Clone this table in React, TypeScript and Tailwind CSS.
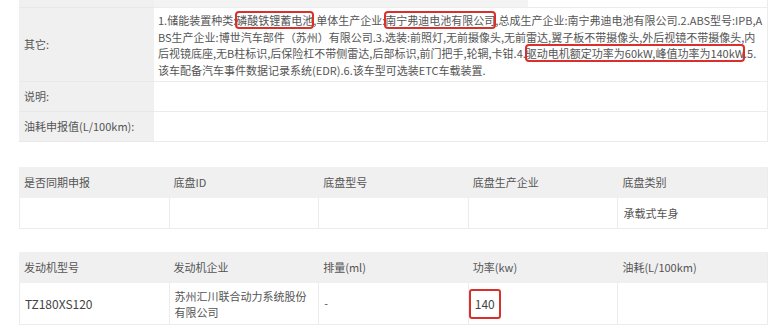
const font = { fontFamily: '"Noto Sans CJK SC", "Noto Sans", sans-serif' };

const Mark = ({ children }: { children: React.ReactNode }) => (
  <span className="rounded-[3px] outline-2 outline-[#d8302b] -outline-offset-1">
    {children}
  </span>
);

const chassisHead = ["是否同期申报", "底盘ID", "底盘型号", "底盘生产企业", "底盘类别"];
const engineHead = ["发动机型号", "发动机企业", "排量(ml)", "功率(kw)", "油耗(L/100km)"];

const App = () => {
  return (
    <div
      className="w-[780px] h-[328px] overflow-hidden bg-white pl-[19px] pr-[12px] text-[11px] text-[#555]"
      style={font}
    >
      {/* info table */}
      <div className="grid grid-cols-[135px_1fr] border-r border-[#ececec]">
        <div className="h-[8px] bg-[#f0f0f0] border-b border-[#e8e8e8]" />
        <div className="h-[8px] border-b border-[#ececec]">
          <div className="h-full w-[374px] bg-[#f3f3f3]" />
        </div>

        <div className="flex items-center bg-[#f0f0f0] px-[5px] border-b border-[#e8e8e8]">其它:</div>
        <div className="h-[74px] px-[4px] pt-[4px] leading-[16.6px] whitespace-nowrap border-b border-[#ececec]">
          <div>
            1.储能装置种类:<Mark>磷酸铁锂蓄电池</Mark>,单体生产企业:<Mark>南宁弗迪电池有限公司</Mark>,总成生产企业:南宁弗迪电池有限公司.2.ABS型号:IPB,A
          </div>
          <div>BS生产企业:博世汽车部件（苏州）有限公司.3.选装:前照灯,无前摄像头,无前雷达,翼子板不带摄像头,外后视镜不带摄像头,内</div>
          <div>
            后视镜底座,无B柱标识,后保险杠不带侧雷达,后部标识,前门把手,轮辋,卡钳.4.<Mark>驱动电机额定功率为60kW,峰值功率为140kW</Mark>.5.
          </div>
          <div>该车配备汽车事件数据记录系统(EDR).6.该车型可选装ETC车载装置.</div>
        </div>

        <div className="flex h-[30px] items-center bg-[#f0f0f0] px-[5px] border-b border-[#e8e8e8]">说明:</div>
        <div className="h-[30px] border-b border-[#ececec]" />

        <div className="flex h-[30px] items-center bg-[#f0f0f0] px-[5px] border-b border-[#e8e8e8]">
          油耗申报值(L/100km):
        </div>
        <div className="h-[30px] border-b border-[#ececec]" />
      </div>

      {/* chassis table */}
      <div className="mt-[25px] grid grid-cols-5 border-r border-b border-[#ececec]">
        {chassisHead.map((h) => (
          <div key={h} className="flex h-[31px] items-center bg-[#f0f0f0] px-[5px]">
            {h}
          </div>
        ))}
        <div className="h-[30px] border-l border-[#ececec]" />
        <div className="h-[30px] border-l border-[#ececec]" />
        <div className="h-[30px] border-l border-[#ececec]" />
        <div className="h-[30px] border-l border-[#ececec]" />
        <div className="flex h-[30px] items-center border-l border-[#ececec] px-[5px]">承载式车身</div>
      </div>

      {/* engine table */}
      <div className="mt-[23px] grid grid-cols-5 border-r border-b border-[#ececec]">
        {engineHead.map((h) => (
          <div key={h} className="flex h-[31px] items-center bg-[#f0f0f0] px-[5px]">
            {h}
          </div>
        ))}
        <div className="flex h-[41px] items-center border-l border-[#ececec] px-[5px] text-[12px] text-[#444]">
          TZ180XS120
        </div>
        <div className="flex h-[41px] items-center border-l border-[#ececec] px-[5px] leading-[16px]">
          苏州汇川联合动力系统股份
          <br />
          有限公司
        </div>
        <div className="flex h-[41px] items-center border-l border-[#ececec] px-[5px]">-</div>
        <div className="flex h-[41px] items-center border-l border-[#ececec]">
          <span className="rounded-[3px] border-2 border-[#d8302b] px-[4px] py-[5px] text-[12px] leading-[16px] text-[#444]">
            140
          </span>
        </div>
        <div className="h-[41px] border-l border-[#ececec]" />
      </div>
    </div>
  );
};

export default App;
